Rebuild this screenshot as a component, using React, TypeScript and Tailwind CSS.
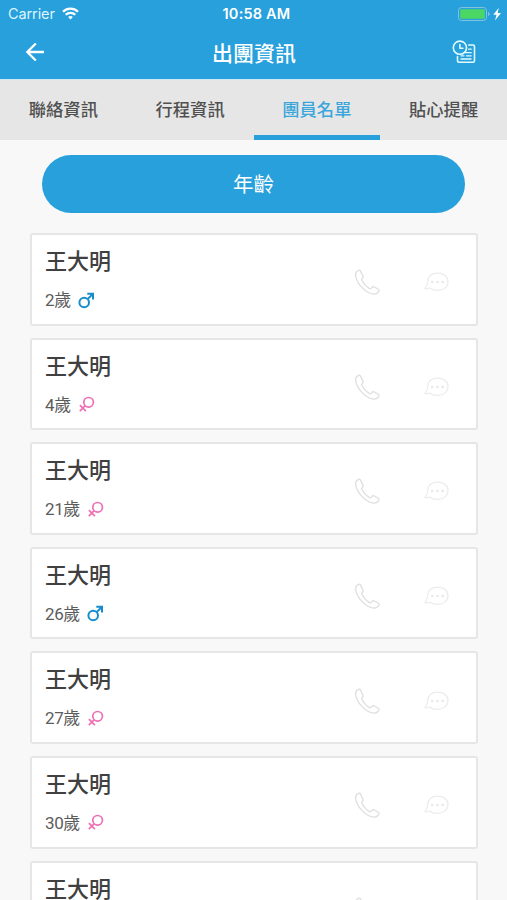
type Gender = 'male' | 'female';

interface Member {
  name: string;
  age: number;
  gender: Gender;
}

const members: Member[] = [
  { name: '王大明', age: 2, gender: 'male' },
  { name: '王大明', age: 4, gender: 'female' },
  { name: '王大明', age: 21, gender: 'female' },
  { name: '王大明', age: 26, gender: 'male' },
  { name: '王大明', age: 27, gender: 'female' },
  { name: '王大明', age: 30, gender: 'female' },
  { name: '王大明', age: 32, gender: 'male' },
];

const tabs = ['聯絡資訊', '行程資訊', '團員名單', '貼心提醒'];
const activeTab = '團員名單';

function WifiIcon() {
  return (
    <svg className="ml-[7px] h-[13px] w-[17px]" viewBox="0 0 17 13" fill="none" stroke="white" strokeWidth="2.2">
      <path d="M1 4.800a10.600 10.600 0 0 1 15 0" />
      <path d="M3.700 7.800a6.800 6.800 0 0 1 9.600 0" />
      <path d="M6.100 10a3.700 3.700 0 0 1 4.800 0L8.500 12.500Z" fill="white" stroke="none" />
    </svg>
  );
}

function BatteryIcon() {
  return (
    <svg className="h-[16px] w-[44px]" viewBox="0 0 44 16" fill="none">
      <rect x="0.5" y="1.5" width="28" height="13" rx="3" stroke="#83c2df" />
      <rect x="2.2" y="3.2" width="24.6" height="9.6" rx="1" fill="#4bd763" />
      <path d="M30 6v4c1.200-.4 1.700-1 1.700-2S31.200 6.400 30 6Z" fill="#83c2df" />
      <path d="M40.800 1.800 35.300 8.800h3.200l-1.500 5.600 6-7.300h-3.400Z" fill="white" />
    </svg>
  );
}

function BackIcon() {
  return (
    <svg className="h-[20px] w-[20px]" viewBox="0 0 20 20" fill="none" stroke="white" strokeWidth="2.3">
      <path d="M19 10H2.500M10.800 1.500 2.300 10l8.500 8.500" />
    </svg>
  );
}

function ScheduleIcon() {
  return (
    <svg className="h-[24px] w-[24px]" viewBox="0 0 24 24" fill="none" stroke="#e0fbff" strokeWidth="1.600" strokeLinecap="round" strokeLinejoin="round">
      <circle cx="7.900" cy="7.700" r="6.600" />
      <path d="M7.900 4.500v3.700h3" />
      <path d="M16.700 5h4.300q1.500 0 1.500 1.500v14.300q0 1.500-1.500 1.500H7q-1.500 0-1.500-1.500v-4.300" />
      <path d="M16.500 9.200h2.700M13.500 12.700h5.700M9 15.800h3M14.500 15.800h4.700M9 19h10" strokeWidth="1.300" />
    </svg>
  );
}

function GenderIcon({ gender }: { gender: Gender }) {
  return gender === 'male' ? (
    <svg className="h-[17px] w-[17px]" viewBox="0 0 17 17" fill="none" stroke="#168dcb" strokeWidth="2">
      <circle cx="6.200" cy="10.500" r="4.800" />
      <path d="M9.600 7.100 14.800 2M9.300 1.800H15v5.700" />
    </svg>
  ) : (
    <svg className="h-[17px] w-[17px]" viewBox="0 0 17 17" fill="none" stroke="#ef6eb4" strokeWidth="1.700">
      <circle cx="10.600" cy="6.300" r="4.800" />
      <path d="M7.200 9.700 1.800 15.100M1.900 9.200l6 6" />
    </svg>
  );
}

function PhoneIcon() {
  return (
    <svg className="h-[28px] w-[28px]" viewBox="0 0 28 28" fill="none" stroke="#dedede" strokeWidth="1.300" strokeLinejoin="round">
      <path d="M5.600 2.300c-1.600.7-3.200 2.100-3 4.700.5 8.200 10.400 18.500 18 19.200 2.400.2 4.400-1.400 5.400-3.200.4-.8.100-1.400-.6-1.800l-4.500-2.400c-.8-.4-1.500-.2-2 .5l-.9 1.100c-.6.5-1.200.4-1.900 0-3.200-1.900-5.700-4.800-7.300-8.100-.3-.7-.2-1.200.3-1.600.9-.7 1.400-1.400.9-2.400L7.400 2.900c-.4-.7-1-.9-1.800-.6Z" />
    </svg>
  );
}

function MessageIcon() {
  return (
    <svg className="h-[20px] w-[26px]" viewBox="0 0 26 20" fill="none" stroke="#ececec" strokeWidth="1.200" strokeLinejoin="round">
      <path d="M13.500 1.200C7.700 1.200 3.600 4.600 3.600 9.400c0 2.500-.5 4.500-2.400 6.500-.3.500 0 1 .6 1 1.500 0 2.700-.5 3.700-.9 2.100 1.600 4.900 2.400 8 2.400 6.200 0 10.500-3.700 10.500-8.900 0-4.900-4.300-8.300-10.500-8.300Z" />
      <g fill="#e8e8e8" stroke="none">
        <circle cx="8.300" cy="10" r="1.300" />
        <circle cx="13.500" cy="10" r="1.300" />
        <circle cx="18.700" cy="10" r="1.300" />
      </g>
    </svg>
  );
}

function MemberCard({ member }: { member: Member }) {
  return (
    <li className="flex h-[92.600px] shrink-0 rounded-[3px] border-2 border-[#e6e6e6] bg-white pl-[13px]">
      <div className="flex flex-1 flex-col">
        <h2 className="mt-[10px] text-[22px] leading-[28px] font-medium text-[#404040]">{member.name}</h2>
        <div className="mt-[15px] flex h-[24px] items-center gap-[7px] text-[17px] leading-[24px] text-[#5c5c5c]">
          <span className="font-['Roboto','Noto_Sans_CJK_TC',sans-serif] tracking-[-0.400px]">{member.age}歲</span>
          <GenderIcon gender={member.gender} />
        </div>
      </div>
      <div className="flex items-center gap-[43px] pt-[6px] pr-[26px]">
        <button aria-label="撥打電話">
          <PhoneIcon />
        </button>
        <button aria-label="傳送訊息">
          <MessageIcon />
        </button>
      </div>
    </li>
  );
}

export default function App() {
  return (
    <div className="flex h-[900px] w-[507px] flex-col overflow-hidden bg-[#f8f8f8] font-['Noto_Sans_CJK_TC',sans-serif]">
      <header className="h-[79px] shrink-0 bg-[#27a0dc] text-white">
        <div className="grid h-[27px] grid-cols-3 items-center pr-[5px] pl-[8px] font-['Inter',sans-serif] text-[14.500px] leading-[27px]">
          <div className="flex items-center text-[#dcf5ff]">
            <span className="tracking-[-0.100px]">Carrier</span>
            <WifiIcon />
          </div>
          <span className="pl-[3px] text-center font-semibold tracking-[0.200px]">10:58 AM</span>
          <div className="flex justify-end">
            <BatteryIcon />
          </div>
        </div>
        <div className="flex h-[50px] items-center justify-between pr-[31px] pl-[25px]">
          <button aria-label="返回" className="w-[31px]">
            <BackIcon />
          </button>
          <h1 className="mb-[1px] text-[21px] leading-[30px] font-medium">出團資訊</h1>
          <button aria-label="行程表">
            <ScheduleIcon />
          </button>
        </div>
      </header>
      <nav className="grid h-[61px] shrink-0 grid-cols-4 border-t border-[#cde8f3] bg-[#e6e6e6]">
        {tabs.map((tab) => (
          <button
            key={tab}
            className={
              tab === activeTab
                ? 'border-b-[5px] border-[#27a0dc] pt-[3px] text-[17.300px] font-medium text-[#3ba6dc]'
                : 'border-b-[5px] border-transparent pt-[3px] text-[17.300px] font-medium text-[#505050]'
            }
          >
            {tab}
          </button>
        ))}
      </nav>
      <main className="flex min-h-0 flex-1 flex-col pt-[15px]">
        <button className="mx-[42px] h-[58px] shrink-0 rounded-full bg-[#27a0dc] pb-px text-[20.500px] text-white">年齡</button>
        <ul className="mt-[20px] flex flex-col gap-[12px] pr-[29px] pl-[30px]">
          {members.map((member, index) => (
            <MemberCard key={index} member={member} />
          ))}
        </ul>
      </main>
    </div>
  );
}
